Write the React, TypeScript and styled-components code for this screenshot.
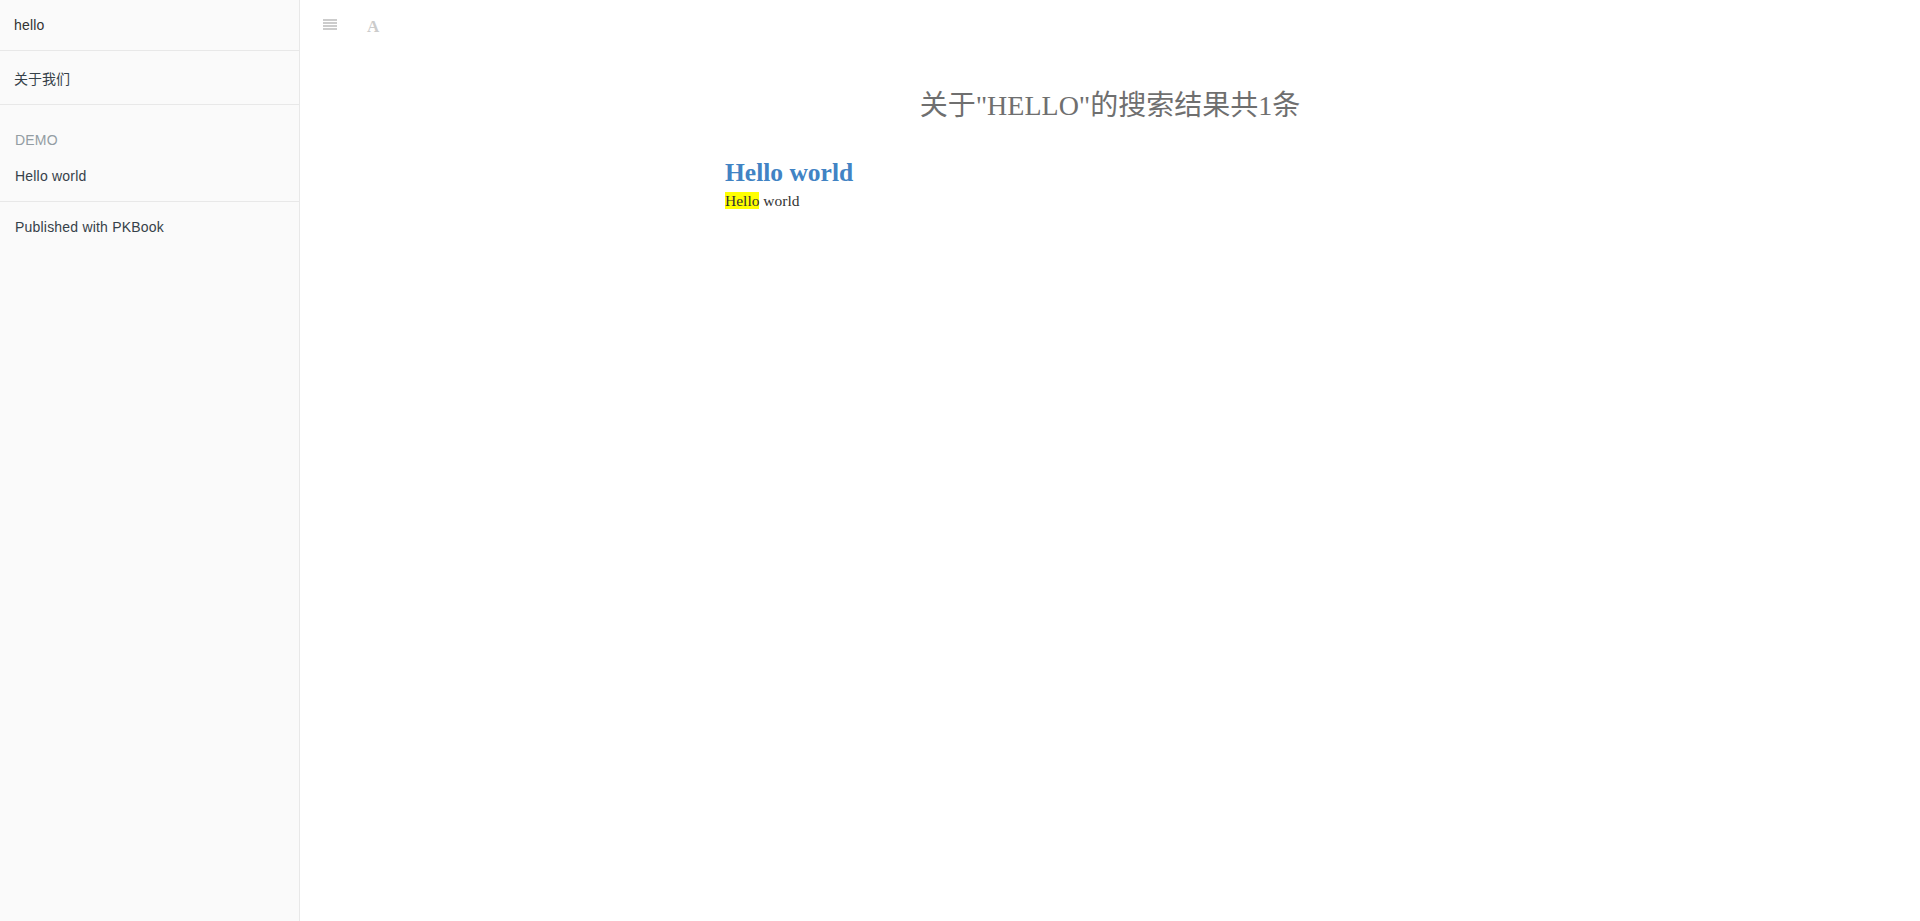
import React from "react";
import styled, { createGlobalStyle } from "styled-components";

const Global = createGlobalStyle`
  html, body { margin: 0; padding: 0; background: #fff; }
  body { font-family: "Liberation Sans", Arial, sans-serif; }
  * { box-sizing: border-box; }
`;

const Layout = styled.div`
  display: flex;
  height: 100vh;
  width: 100%;
  overflow: hidden;
`;

const Sidebar = styled.aside`
  width: 300px;
  flex: 0 0 300px;
  background: #fafafa;
  border-right: 1px solid rgba(0, 0, 0, 0.07);
  display: flex;
  flex-direction: column;
  font-family: "Liberation Sans", Arial, "Noto Sans CJK SC", sans-serif;
  font-size: 14px;
  letter-spacing: 0.2px;
  color: #364149;
`;

const Search = styled.div`
  height: 51px;
  border-bottom: 1px solid rgba(0, 0, 0, 0.07);
  display: flex;
  align-items: center;
  padding: 0 14px;
  color: #333;
  line-height: 20px;
`;

const Section = styled.div<{ $top: number; $bottom: number; $last?: boolean }>`
  display: flex;
  flex-direction: column;
  padding: ${(p) => p.$top}px 15px ${(p) => p.$bottom}px 15px;
  border-bottom: ${(p) => (p.$last ? "none" : "1px solid rgba(0, 0, 0, 0.07)")};
  gap: 16px;
`;

const Item = styled.a`
  display: block;
  line-height: 20px;
  color: #364149;
  text-decoration: none;
  white-space: nowrap;
`;

const CjkItem = styled(Item)`
  margin-left: -1px;
  letter-spacing: 0;
`;

const Header = styled.div`
  color: #939da3;
  text-transform: uppercase;
  line-height: 20px;
`;

const Main = styled.main`
  flex: 1;
  display: flex;
  flex-direction: column;
  min-width: 0;
`;

const Toolbar = styled.div`
  height: 50px;
  display: flex;
  align-items: center;
  padding: 0 8px;
`;

const ToolButton = styled.button`
  height: 50px;
  padding: 0 15px;
  border: none;
  background: none;
  display: flex;
  align-items: center;
  color: #ccc;
  cursor: pointer;
`;

const FontGlyph = styled.span`
  font-family: "Liberation Serif", "Times New Roman", serif;
  font-weight: bold;
  font-size: 17px;
  line-height: 1;
  color: #ccc;
  margin-top: 2px;
`;

const Page = styled.div`
  max-width: 800px;
  width: 100%;
  margin: 0 auto;
  padding: 20px 15px 40px 15px;
`;

const Title = styled.h1`
  margin: 16px 0 32px 0;
  text-align: center;
  font-weight: normal;
  font-size: 28px;
  line-height: 40px;
  color: #6f6f6f;
  font-family: "Liberation Serif", "Noto Sans CJK SC", serif;
`;

const ResultTitle = styled.h3`
  margin: 0;
  font-family: "Liberation Serif", serif;
  font-weight: bold;
  font-size: 25.5px;
  line-height: 30px;
  color: #4183c4;
`;

const ResultText = styled.p`
  margin: 3px 0 0 0;
  font-family: "Liberation Serif", serif;
  font-size: 15.5px;
  line-height: 20px;
  color: #333;
`;

const Mark = styled.span`
  background: #ffff00;
`;

const MenuIcon = () => (
  <svg width="14" height="12" viewBox="0 0 14 12" fill="#ccc">
    <rect x="0" y="0" width="14" height="2" />
    <rect x="0" y="3" width="14" height="2" />
    <rect x="0" y="6" width="14" height="2" />
    <rect x="0" y="9" width="14" height="2" />
  </svg>
);

export default function App() {
  return (
    <>
      <Global />
      <Layout>
        <Sidebar>
          <Search>hello</Search>
          <Section $top={18} $bottom={15}>
            <CjkItem href="#">关于我们</CjkItem>
          </Section>
          <Section $top={25} $bottom={15}>
            <Header>Demo</Header>
            <Item href="#">Hello world</Item>
          </Section>
          <Section $top={15} $bottom={15} $last>
            <Item href="#">Published with PKBook</Item>
          </Section>
        </Sidebar>
        <Main>
          <Toolbar>
            <ToolButton aria-label="toggle summary">
              <MenuIcon />
            </ToolButton>
            <ToolButton aria-label="font settings">
              <FontGlyph>A</FontGlyph>
            </ToolButton>
          </Toolbar>
          <Page>
            <Title>关于"HELLO"的搜索结果共1条</Title>
            <ResultTitle>Hello world</ResultTitle>
            <ResultText>
              <Mark>Hello</Mark> world
            </ResultText>
          </Page>
        </Main>
      </Layout>
    </>
  );
}
